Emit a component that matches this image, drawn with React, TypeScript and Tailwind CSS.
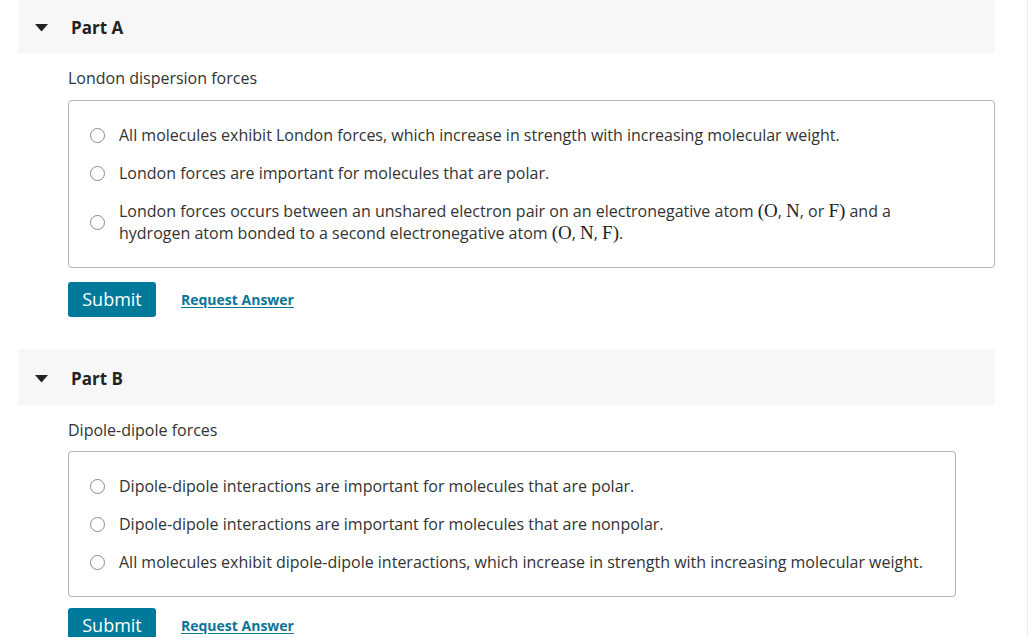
import React from 'react';

type Opt = { id: string; body: React.ReactNode };

const M = ({ children }: { children: React.ReactNode }) => (
  <span className="font-['Liberation_Serif',serif] text-[19px] leading-none text-[#222]">{children}</span>
);

const partA: Opt[] = [
  { id: 'a1', body: 'All molecules exhibit London forces, which increase in strength with increasing molecular weight.' },
  { id: 'a2', body: 'London forces are important for molecules that are polar.' },
  {
    id: 'a3',
    body: (
      <>
        London forces occurs between an unshared electron pair on an electronegative atom <M>(O</M>, <M>N</M>, or <M>F</M>
        <M>)</M> and a hydrogen atom bonded to a second electronegative atom <M>(O</M>, <M>N</M>, <M>F</M>
        <M>)</M>.
      </>
    ),
  },
];

const partB: Opt[] = [
  { id: 'b1', body: 'Dipole-dipole interactions are important for molecules that are polar.' },
  { id: 'b2', body: 'Dipole-dipole interactions are important for molecules that are nonpolar.' },
  { id: 'b3', body: 'All molecules exhibit dipole-dipole interactions, which increase in strength with increasing molecular weight.' },
];

function Part({ title, prompt, options, first }: { title: string; prompt: string; options: Opt[]; first?: boolean }) {
  return (
    <section className={first ? '' : 'mt-[32px]'}>
      <div className={`flex items-center bg-[#f7f7f7] pt-[2px] ${first ? 'h-[53px]' : 'h-[56px] pt-[4px]'}`}>
        <svg width="13" height="8" viewBox="0 0 13 8" className="ml-[17px] mr-[23px]">
          <path d="M0 0h13L6.5 7.5z" fill="#222" />
        </svg>
        <h2 className="text-[17px] font-bold text-[#222]">{title}</h2>
      </div>
      <div className="pl-[50px]">
        <p className="mt-[14px] leading-[22px] text-[16px] text-[#333]">{prompt}</p>
        <div className={`w-fit max-w-[927px] rounded-[4px] border border-[#b3b3b3] py-[23px] pl-[21px] pr-[32px] ${first ? 'mt-[11px]' : 'mt-[10px]'}`}>
          <div className="flex flex-col gap-[16px]">
            {options.map((o) => (
              <label key={o.id} className="flex items-center gap-[14px] text-[16px] leading-[22px] text-[#333]">
                <span className="h-[15px] w-[15px] shrink-0 rounded-full border border-[#8a8a8a] bg-white" />
                <span>{o.body}</span>
              </label>
            ))}
          </div>
        </div>
        <div className={`flex items-center gap-[25px] ${first ? 'mt-[14px]' : 'mt-[11px]'}`}>
          <button className="h-[35px] w-[88px] rounded-[3px] bg-[#007a9a] text-[18px] text-white">Submit</button>
          <a className="text-[14px] font-bold text-[#0b7596] underline underline-offset-2">Request Answer</a>
        </div>
      </div>
    </section>
  );
}

export default function App() {
  return (
    <div className="min-h-screen w-[1028px] border-r border-[#ececec] bg-white font-['Open_Sans',sans-serif]">
      <div className="ml-[18px] w-[977px]">
        <Part title="Part A" prompt="London dispersion forces" options={partA} first />
        <Part title="Part B" prompt="Dipole-dipole forces" options={partB} />
      </div>
    </div>
  );
}
